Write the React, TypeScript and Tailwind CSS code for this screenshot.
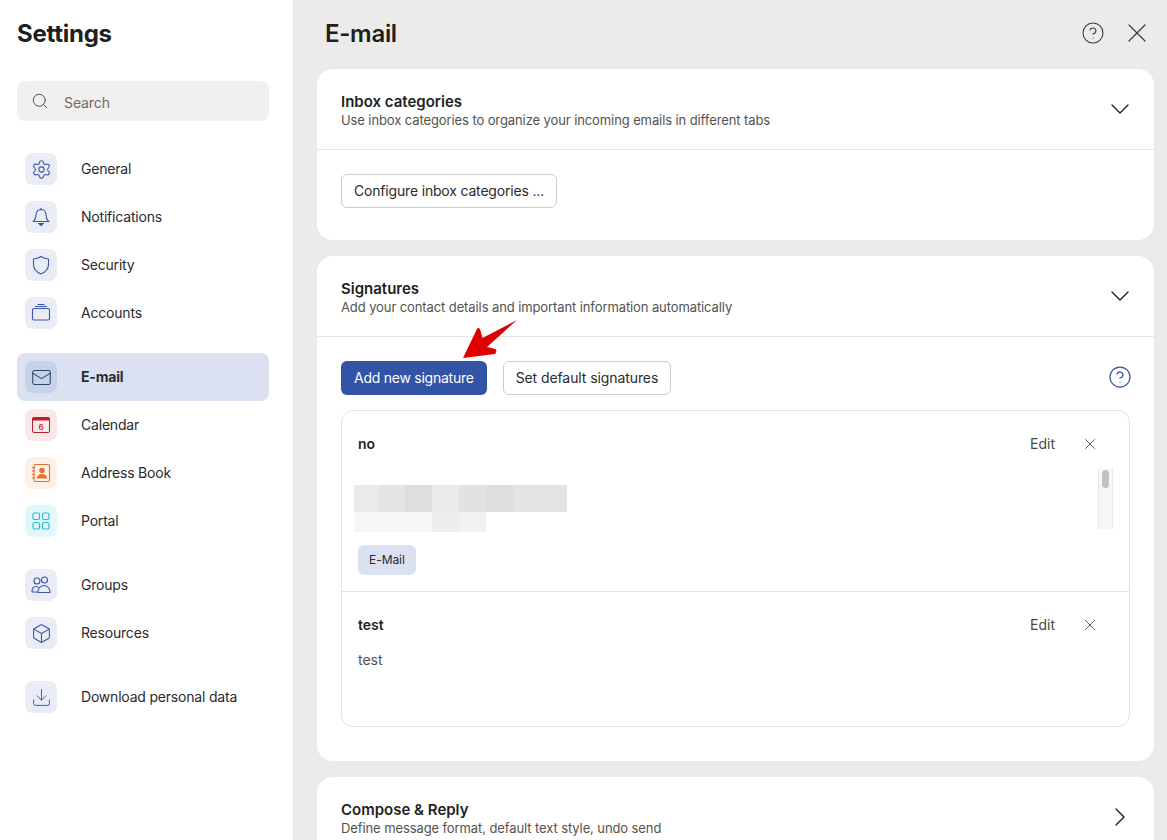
import { Search, Mail, Box, Download, ChevronDown, ChevronRight, X, CircleHelp, Settings } from 'lucide-react';

const blue = 'text-[#3b55ad]';

function BellIcon() {
  return (
    <svg width="20" height="20" viewBox="0 0 20 20" fill="none" stroke="currentColor" strokeWidth="1.1">
      <path d="M10 1v1.500M10 2.500c-3.300 0-5 2.500-5 5.500 0 3.500-1 5-2.500 6.500h15C16 13 15 11.500 15 8c0-3-1.700-5.500-5-5.500z" />
      <path d="M7.800 16.500h4.400L10 18.500z" fill="currentColor" />
    </svg>
  );
}

function ShieldIcon() {
  return (
    <svg width="20" height="20" viewBox="0 0 20 20" fill="none" stroke="currentColor" strokeWidth="1.1" strokeLinejoin="round">
      <path d="M10 1.500c2.500 1.500 5 2.300 7.500 2.500v5.500c0 4.500-3 7.500-7.500 9.500-4.500-2-7.500-5-7.500-9.500V4C5 3.800 7.500 3 10 1.500z" />
    </svg>
  );
}

function AccountsIcon() {
  return (
    <svg width="20" height="20" viewBox="0 0 20 20" fill="none" stroke="currentColor" strokeWidth="1.1">
      <rect x="1.500" y="5.500" width="17" height="11.500" rx="1.500" />
      <path d="M4 3.500h12M6.500 1.500h7" />
    </svg>
  );
}

function CalendarIcon() {
  return (
    <svg width="20" height="20" viewBox="0 0 20 20" fill="none">
      <rect x="1.500" y="2.500" width="17" height="15" rx="1.500" stroke="#b9202c" strokeWidth="1" />
      <path d="M1.500 4a1.500 1.500 0 0 1 1.500-1.500h14a1.500 1.500 0 0 1 1.500 1.500v1h-17z" fill="#b9202c" stroke="#b9202c" strokeWidth="1" />
      <text x="10" y="15" textAnchor="middle" fontSize="8" fontWeight="600" fill="#d02a3a" fontFamily="Inter, sans-serif">6</text>
    </svg>
  );
}

function AddressIcon() {
  return (
    <svg width="20" height="20" viewBox="0 0 20 20" fill="none" stroke="#e8702e" strokeWidth="1.100">
      <rect x="3" y="1.500" width="15.500" height="17" rx="1.500" />
      <path d="M1 4.500h3M1 8h3M1 11.500h3M1 15h3" />
      <circle cx="11" cy="7.500" r="2.700" fill="#e8702e" stroke="none" />
      <path d="M6 15.500c0-3 2-4.500 5-4.500s5 1.500 5 4.500z" fill="#e8702e" stroke="none" />
    </svg>
  );
}

function PortalIcon() {
  return (
    <svg width="20" height="20" viewBox="0 0 20 20" fill="none" stroke="#2cbcd8" strokeWidth="1.200">
      <rect x="2" y="2" width="6.500" height="6.500" rx="1.600" />
      <rect x="11.500" y="2" width="6.500" height="6.500" rx="1.600" />
      <rect x="2" y="11.500" width="6.500" height="6.500" rx="1.600" />
      <rect x="11.500" y="11.500" width="6.500" height="6.500" rx="1.600" />
    </svg>
  );
}

function GroupsIcon() {
  return (
    <svg width="20" height="20" viewBox="0 0 20 20" fill="none" stroke="currentColor" strokeWidth="1.100">
      <circle cx="6" cy="6" r="3" />
      <circle cx="13.500" cy="5" r="3" />
      <path d="M1 17c0-3 1.500-5.500 4-5.500 1.500 0 2.300.8 2.500 1.500M1 17h5.500" />
      <path d="M7 17.500c0-4 2.500-7 6-7s6 3 6 7z" />
    </svg>
  );
}

function Arrow() {
  return (
    <svg className="absolute left-[460px] top-[318px]" width="60" height="42" viewBox="0 0 60 42">
      <defs>
        <linearGradient id="arrowFill" x1="0" y1="1" x2="1" y2="0">
          <stop offset="0" stopColor="#e60000" />
          <stop offset="1" stopColor="#d40000" />
        </linearGradient>
      </defs>
      <path d="M3 40 L17 11 Q18 9 20 11 L22.500 20 L57 2 L27 29 L35.500 31 Q37.500 33 35 36 Z" fill="url(#arrowFill)" />
    </svg>
  );
}

const groups = [
  [
    { label: 'General', icon: <Settings size={21} strokeWidth={1.200} />, tile: 'bg-[#e9ebf5]', color: blue },
    { label: 'Notifications', icon: <BellIcon />, tile: 'bg-[#e9ebf5]', color: blue },
    { label: 'Security', icon: <ShieldIcon />, tile: 'bg-[#e9ebf5]', color: blue },
    { label: 'Accounts', icon: <AccountsIcon />, tile: 'bg-[#e9ebf5]', color: blue },
  ],
  [
    { label: 'E-mail', icon: <Mail size={21} strokeWidth={1.200} />, tile: 'bg-[#c5d3ea]', color: 'text-[#34405c]', active: true },
    { label: 'Calendar', icon: <CalendarIcon />, tile: 'bg-[#f8e8e8]', color: '' },
    { label: 'Address Book', icon: <AddressIcon />, tile: 'bg-[#fdf0e7]', color: '' },
    { label: 'Portal', icon: <PortalIcon />, tile: 'bg-[#e3f6f9]', color: '' },
  ],
  [
    { label: 'Groups', icon: <GroupsIcon />, tile: 'bg-[#e9ebf5]', color: blue },
    { label: 'Resources', icon: <Box size={21} strokeWidth={1.200} />, tile: 'bg-[#e9ebf5]', color: blue },
  ],
  [{ label: 'Download personal data', icon: <Download size={21} strokeWidth={1.100} />, tile: 'bg-[#e9ebf5]', color: blue }],
];

function Sidebar() {
  return (
    <aside className="w-[293px] shrink-0 bg-white px-[17px]">
      <h1 className="pt-[18px] text-[24px] leading-[32px] font-bold tracking-[-0.25px] text-[#1d1f23]">Settings</h1>
      <div className="mt-[31px] flex h-[40px] w-[252px] items-center rounded-[8px] bg-[#f1f0ee] pl-[14px]">
        <Search size={18} strokeWidth={1.250} className="text-[#4a4743]" />
        <span className="ml-[15px] pt-[2px] text-[14px] tracking-[-0.1px] text-[#6f6c68]">Search</span>
      </div>
      <nav className="mt-[24px] flex w-[252px] flex-col gap-[16px]">
        {groups.map((group, i) => (
          <ul key={i} className="flex flex-col">
            {group.map((item) => (
              <li
                key={item.label}
                className={`flex h-[48px] items-center rounded-[8px] pl-[8px] ${item.active ? 'bg-[#dce1f1]' : ''}`}
              >
                <span className={`flex h-[32px] w-[32px] items-center justify-center rounded-[8px] ${item.tile} ${item.color}`}>
                  {item.icon}
                </span>
                <span className={`ml-[24px] pb-[2px] text-[14px] tracking-[-0.2px] text-[#2a2b2e] ${item.active ? 'font-bold' : ''}`}>
                  {item.label}
                </span>
              </li>
            ))}
          </ul>
        ))}
      </nav>
    </aside>
  );
}

function CardHeader({ title, sub, open = true }: { title: string; sub: string; open?: boolean }) {
  return (
    <div className={`flex h-[81px] items-center justify-between border-b pl-[24px] pr-[18px] ${open ? 'border-[#e6e5e3]' : 'border-transparent'}`}>
      <div className="pt-[2px]">
        <div className="text-[15px] leading-[20px] font-semibold text-[#1d1f23]">{title}</div>
        <div className="text-[13px] leading-[16px] tracking-[-0.1px] text-[#55524e]">{sub}</div>
      </div>
      {open ? (
        <ChevronDown size={32} strokeWidth={1} className="text-[#1d1f23]" />
      ) : (
        <ChevronRight size={32} strokeWidth={1} className="text-[#1d1f23]" />
      )}
    </div>
  );
}

function OutlineButton({ children, tight }: { children: React.ReactNode; tight?: boolean }) {
  return (
    <button
      className={`h-[34px] rounded-[6px] border border-[#c9ccd4] bg-white px-[12px] pb-[2px] text-[14px] text-[#2a2b2e] ${
        tight ? 'tracking-[-0.18px]' : 'tracking-[-0.09px]'
      }`}
    >
      {children}
    </button>
  );
}

function SigHead({ name }: { name: string }) {
  return (
    <div className="flex items-center justify-between pl-[16px] pr-[30px]">
      <span className="text-[14px] font-semibold text-[#1d1f23]">{name}</span>
      <div className="flex items-center gap-[26px]">
        <span className="text-[14px] text-[#4a4743]">Edit</span>
        <X size={18} strokeWidth={1} className="text-[#2a2b2e]" />
      </div>
    </div>
  );
}

const blurTop = [
  ['w-[24px]', 'bg-[#ecebe9]'],
  ['w-[27px]', 'bg-[#e5e4e2]'],
  ['w-[27px]', 'bg-[#dfdedc]'],
  ['w-[27px]', 'bg-[#ecebe9]'],
  ['w-[27px]', 'bg-[#e3e2e0]'],
  ['w-[27px]', 'bg-[#dfdedc]'],
  ['w-[54px]', 'bg-[#e4e3e1]'],
];
const blurBottom = [
  ['w-[24px]', 'bg-[#f6f6f5]'],
  ['w-[54px]', 'bg-[#f6f6f5]'],
  ['w-[27px]', 'bg-[#efeeed]'],
  ['w-[27px]', 'bg-[#f2f2f1]'],
];

export default function App() {
  return (
    <div className="relative flex h-[840px] w-[1167px] overflow-hidden bg-[#ecebe9] font-['Inter',sans-serif]">
      <Sidebar />
      <main className="min-w-0 flex-1 pl-[24px] pr-[13px]">
        <header className="flex h-[69px] items-center justify-between pb-[3px] pl-[8px] pr-[1px]">
          <h2 className="pt-[2px] text-[24px] font-semibold tracking-[-0.3px] text-[#1d1f23]">E-mail</h2>
          <div className="flex items-center gap-[16px] text-[#3f3c38]">
            <CircleHelp size={24} strokeWidth={1.100} />
            <X size={32} strokeWidth={0.900} />
          </div>
        </header>

        <div className="flex flex-col gap-[16px]">
          <section className="h-[171px] rounded-[16px] bg-white">
            <CardHeader title="Inbox categories" sub="Use inbox categories to organize your incoming emails in different tabs" />
            <div className="pl-[24px] pt-[24px]">
              <OutlineButton tight>Configure inbox categories ...</OutlineButton>
            </div>
          </section>

          <section className="h-[505px] rounded-[16px] bg-white">
            <CardHeader title="Signatures" sub="Add your contact details and important information automatically" />
            <div className="px-[24px] pt-[24px]">
              <div className="flex items-center">
                <button className="h-[34px] rounded-[6px] bg-[#3353a7] px-[13px] pb-[2px] text-[14px] tracking-[-0.25px] text-white">
                  Add new signature
                </button>
                <div className="ml-[16px]">
                  <OutlineButton>Set default signatures</OutlineButton>
                </div>
                <CircleHelp size={24} strokeWidth={1.250} className="ml-auto mb-[2px] mr-[-2px] text-[#3353a7]" />
              </div>

              <div className="mt-[15px] h-[317px] rounded-[12px] border border-[#e3e2e0]">
                <div className="h-[181px] border-b border-[#e3e2e0] pt-[22px]">
                  <SigHead name="no" />
                  <div className="relative mt-[23px] h-[60px] pt-[8px]">
                    <div className="flex h-[27px] pl-[12px]">
                      {blurTop.map(([w, c], i) => (
                        <div key={i} className={`${w} ${c}`} />
                      ))}
                    </div>
                    <div className="flex h-[20px] pl-[12px]">
                      {blurBottom.map(([w, c], i) => (
                        <div key={i} className={`${w} ${c}`} />
                      ))}
                    </div>
                    <div className="absolute right-[16px] top-[-8px] h-[60px] w-[15px] border-x border-[#e8e8e8] bg-[#f7f7f7] px-[3px] pt-[1px]">
                      <div className="h-[18px] rounded-full bg-[#c2c2c2]" />
                    </div>
                  </div>
                  <span className="ml-[16px] mt-[8px] inline-flex h-[30px] items-center rounded-[6px] bg-[#dce1f1] px-[11px] text-[12px] tracking-[-0.05px] text-[#2a2b2e]">
                    E-Mail
                  </span>
                </div>
                <div className="pt-[22px]">
                  <SigHead name="test" />
                  <div className="pl-[16px] pt-[14px] text-[14px] text-[#55524e]">test</div>
                </div>
              </div>
            </div>
          </section>

          <section className="rounded-t-[16px] bg-white">
            <CardHeader open={false} title="Compose & Reply" sub="Define message format, default text style, undo send" />
          </section>
        </div>
      </main>
      <Arrow />
    </div>
  );
}
